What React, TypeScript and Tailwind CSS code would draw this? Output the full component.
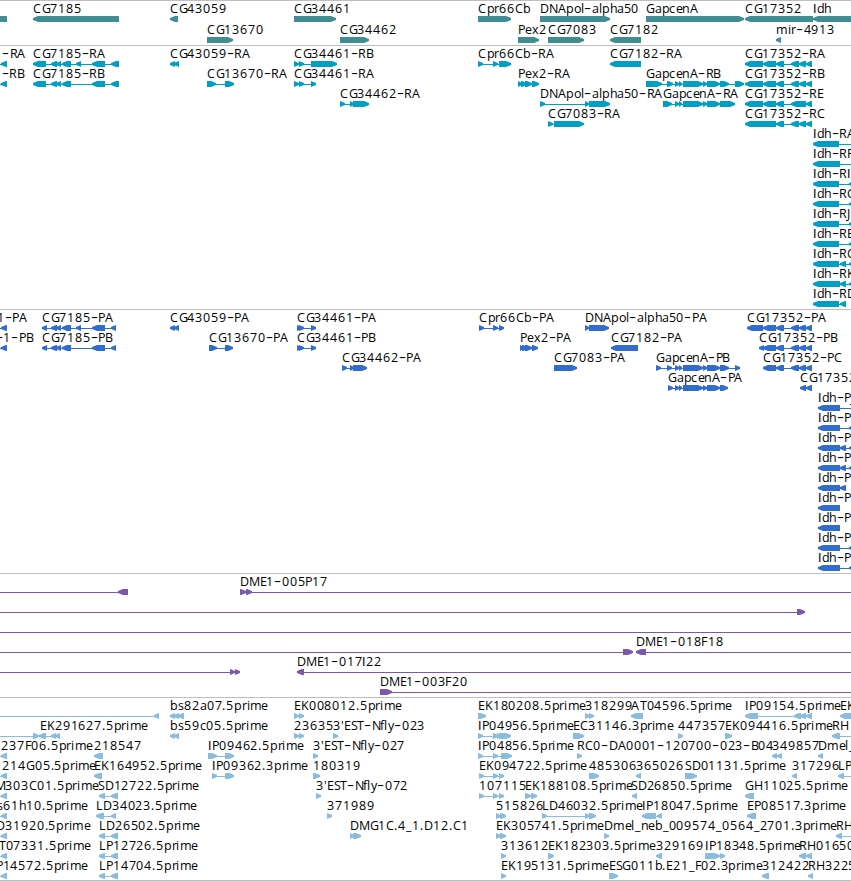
import React from "react";

type Strand = "L" | "R";
type Feature = {
  row: number;
  strand: Strand;
  blocks: [number, number][];
  label?: string;
  x?: number;
  end?: number;
  line?: [number, number];
};

const EDGE = 860;

// Horizontal advance of each character in the browser's label face, in pixels.
const ADVANCE: Record<string, number> = {
  A: 8.2, B: 6.9, C: 8.2, D: 8.9, E: 6.7, F: 6.4, G: 8.6, H: 8.8, I: 3.5, J: 3.6, K: 7.6, L: 6.4,
  M: 10.4, N: 8.7, O: 9.2, P: 6.9, R: 7.6, S: 6.2, T: 6.9, a: 6.8, b: 7.5, c: 6.2, d: 7.4, e: 6.9,
  f: 4.1, h: 7.2, i: 3.5, l: 3.4, m: 11.2, n: 7.4, o: 7.3, p: 7.5, r: 4.9, s: 6.1, x: 6.8, y: 6.4,
  ".": 3.9, "-": 7.5, "_": 6, "'": 3,
};
const advance = (c: string) => ADVANCE[c] ?? 7.9;
const widthOf = (s: string) => [...s].reduce((w, c) => w + advance(c), 0);

// Splits a label into runs: hyphens and the capital I are styled on their own.
function labelRuns(text: string, x: number) {
  let pen = x;
  return text
    .split(/([-I])/)
    .filter(Boolean)
    .map((run) => {
      const xs = [...run].map((c) => {
        const at = Math.round(pen + 0.4);
        pen += advance(c);
        return at;
      });
      return { run, xs: xs.join(" ") };
    });
}

const f = (
  row: number,
  label: string,
  x: number,
  strand: Strand,
  blocks: [number, number][],
  line?: [number, number],
): Feature => ({ row, label: label || undefined, x, strand, blocks, line });

const cut = (row: number, label: string, end: number): Feature => ({
  row, label, end, strand: "L", blocks: [[1, 7]], line: [-5, 3],
});

const genes: Feature[] = [
  f(0, "", 0, "L", [[-30, 7]]),
  f(0, "CG7185", 33, "L", [[33, 119]]),
  f(0, "CG43059", 170, "L", [[170, 178]]),
  f(0, "CG34461", 294, "R", [[294, 336]]),
  f(0, "Cpr66Cb", 478, "R", [[478, 511]]),
  f(0, "DNApol-alpha50", 540, "R", [[540, 610]]),
  f(0, "GapcenA", 646, "R", [[646, 744]]),
  f(0, "CG17352", 745, "L", [[745, 813]]),
  f(0, "Idh", 813, "L", [[813, EDGE]]),
  f(1, "CG13670", 207, "R", [[207, 233]]),
  f(1, "CG34462", 340, "R", [[340, 369]]),
  f(1, "Pex2", 518, "R", [[518, 539]]),
  f(1, "CG7083", 548, "R", [[548, 584]]),
  f(1, "CG7182", 610, "L", [[610, 641]]),
  f(1, "mir-4913", 776, "L", [[776, 781]]),
];

const gapMid: [number, number][] = [[675, 679], [679, 682], [683, 703], [703, 707], [707, 720]];
const cgTail: [number, number][] = [[776, 784], [791, 799], [799, 806], [806, 812]];

const transcripts: Feature[] = [
  cut(0, "-RA", 25),
  cut(1, "-RB", 23.5),
  f(0, "CG7185-RA", 33, "L", [[33, 46], [51, 57], [56, 61], [62, 71], [76, 81], [92, 105], [111, 119]]),
  f(1, "CG7185-RB", 33, "L", [[33, 46], [51, 57], [56, 61], [62, 71], [92, 105], [111, 119]]),
  f(0, "CG43059-RA", 170, "L", [[170, 175], [174, 179]]),
  f(1, "CG13670-RA", 207, "R", [[207, 216], [225, 234]]),
  f(0, "CG34461-RB", 294, "R", [[294, 299], [299, 304], [311, 337]]),
  f(1, "CG34461-RA", 294, "R", [[294, 299], [299, 304], [311, 316]]),
  f(2, "CG34462-RA", 340, "R", [[340, 345], [350, 354], [353, 369]]),
  f(0, "Cpr66Cb-RA", 478, "R", [[478, 483], [493, 498], [499, 511]]),
  f(1, "Pex2-RA", 518, "R", [[518, 522], [521, 527], [525, 532], [532, 539]]),
  f(2, "DNApol-alpha50-RA", 540, "R", [[540, 545], [585, 589], [589, 610]]),
  f(3, "CG7083-RA", 548, "R", [[548, 553], [554, 584]]),
  f(0, "CG7182-RA", 610, "L", [[610, 641]]),
  f(1, "GapcenA-RB", 646, "R", [[646, 662], [667, 673], ...gapMid, [720, 729], [735, 744]]),
  f(2, "GapcenA-RA", 663, "R", [[663, 672], ...gapMid, [720, 735]]),
  f(0, "CG17352-RA", 745, "L", [[745, 763], [763, 776], ...cgTail]),
  f(1, "CG17352-RB", 745, "L", [[745, 763], [763, 776], ...cgTail]),
  f(2, "CG17352-RE", 745, "L", [[745, 763], [763, 776], [776, 784], [791, 806], [806, 812]]),
  f(3, "CG17352-RC", 745, "L", [[745, 776], ...cgTail]),
  f(4, "Idh-RA", 813, "L", [[813, 839]], [830, EDGE]),
  f(5, "Idh-RF", 813, "L", [[813, 840]], [830, EDGE]),
  f(6, "Idh-RI", 813, "L", [[813, 839], [849, 856]], [830, EDGE]),
  f(7, "Idh-RG", 813, "L", [[813, 839], [849, 856]], [830, EDGE]),
  f(8, "Idh-RJ", 813, "L", [[813, 839], [849, 856]], [830, EDGE]),
  f(9, "Idh-RB", 813, "L", [[813, 839], [849, 856]], [830, EDGE]),
  f(10, "Idh-RC", 813, "L", [[813, 839], [840, 846], [849, 856]], [830, EDGE]),
  f(11, "Idh-RK", 813, "L", [[813, 840], [840, 846], [849, 856]], [830, EDGE]),
  f(12, "Idh-RD", 813, "L", [[813, 839], [840, 846]]),
];

const proteins: Feature[] = [
  cut(0, "1-PA", 27),
  cut(1, "-1-PB", 32),
  f(0, "CG7185-PA", 42, "L", [[42, 47], [51, 57], [56, 61], [62, 71], [76, 81], [92, 105], [111, 116]]),
  f(1, "CG7185-PB", 42, "L", [[42, 47], [51, 57], [56, 61], [62, 71], [92, 105], [111, 116]]),
  f(0, "CG43059-PA", 170, "L", [[170, 175], [174, 179]]),
  f(1, "CG13670-PA", 209, "R", [[209, 217], [225, 233]]),
  f(0, "CG34461-PA", 297, "R", [[297, 302], [299, 304], [311, 316]]),
  f(1, "CG34461-PB", 297, "R", [[297, 302], [299, 304], [311, 316]]),
  f(2, "CG34462-PA", 342, "R", [[342, 347], [350, 354], [353, 367]]),
  f(0, "Cpr66Cb-PA", 479, "R", [[479, 484], [493, 498], [499, 504]]),
  f(1, "Pex2-PA", 520, "R", [[520, 524], [522, 528], [525, 532], [532, 538]]),
  f(2, "CG7083-PA", 554, "R", [[554, 577]]),
  f(0, "DNApol-alpha50-PA", 585, "R", [[585, 589], [589, 609]]),
  f(1, "CG7182-PA", 611, "L", [[611, 638]]),
  f(2, "GapcenA-PB", 656, "R", [[656, 661], [667, 672], ...gapMid, [720, 729], [735, 740]]),
  f(3, "GapcenA-PA", 668, "R", [[668, 673], ...gapMid, [720, 728]]),
  f(0, "CG17352-PA", 747, "L", [[747, 763], [763, 776], ...cgTail]),
  f(1, "CG17352-PB", 759, "L", [[759, 764], [763, 776], ...cgTail]),
  f(2, "CG17352-PC", 763, "L", [[763, 776], ...cgTail]),
  f(3, "CG17352-PD", 800, "L", [[800, 806], [806, 812]]),
  f(4, "Idh-PJ", 818, "L", [[818, 840]], [830, EDGE]),
  f(5, "Idh-PF", 818, "L", [[818, 840], [849, 856]], [830, EDGE]),
  f(6, "Idh-PC", 818, "L", [[818, 840], [840, 846], [849, 856]], [830, EDGE]),
  f(7, "Idh-PK", 818, "L", [[818, 840], [840, 846], [849, 856]], [830, EDGE]),
  f(8, "Idh-PD", 818, "L", [[818, 840], [840, 846]]),
  f(9, "Idh-PA", 818, "L", [[818, 840]]),
  f(10, "Idh-PI", 818, "L", [[818, 840]]),
  f(11, "Idh-PG", 818, "L", [[818, 840], [849, 856]], [830, EDGE]),
  f(12, "Idh-PB", 818, "L", [[818, 840], [849, 856]], [830, EDGE]),
];

const clones: Feature[] = [
  f(0, "", 0, "L", [[118, 128]], [-5, 120]),
  f(0, "DME1-005P17", 240, "R", [[240, 246], [246, 252]], [246, EDGE]),
  f(1, "", 0, "R", [[797, 805]], [-5, 800]),
  f(2, "", 0, "R", [], [-5, EDGE]),
  f(3, "", 0, "R", [[623, 633]], [-5, 626]),
  f(3, "DME1-018F18", 636, "L", [[636, 646]], [640, EDGE]),
  f(4, "", 0, "R", [[230, 235], [235, 240]], [-5, 235]),
  f(4, "DME1-017I22", 297, "L", [[297, 304]], [300, EDGE]),
  f(5, "DME1-003F20", 380, "R", [[380, 392]], [385, EDGE]),
];

const lpTail: [number, number][] = [[99, 105], [111, 118]];

const ests: Feature[] = [
  f(0, "", 0, "L", [[154, 159]], [-5, 156]),
  f(0, "bs82a07.5prime", 170, "L", [[170, 175], [174, 179], [178, 184]]),
  f(0, "EK008012.5prime", 294, "R", [[294, 299], [299, 304]]),
  f(0, "EK180208.5prime", 478, "R", [[478, 486]]),
  f(0, "318299", 585, "R", [[585, 590], [589, 594]]),
  f(0, "AT04596.5prime", 631, "L", [[631, 643]]),
  f(0, "IP09154.5prime", 745, "L", [[745, 758], [794, 801], [800, 806], [806, 812]]),
  f(0, "EK", 840, "L", [[840, EDGE]]),
  f(1, "", 0, "R", [[33, 39]], [-5, 35]),
  f(1, "EK291627.5prime", 40, "L", [[39, 46], [51, 56], [55, 60]]),
  f(1, "bs59c05.5prime", 170, "L", [[170, 175], [174, 179]]),
  f(1, "23635", 294, "R", [[294, 299], [299, 304]]),
  f(1, "3'EST-Nfly-023", 333, "R", [[333, 338]]),
  f(1, "IP04956.5prime", 478, "R", [[478, 483], [493, 498], [497, 501], [499, 511]]),
  f(1, "EC31146.3prime", 573, "R", [[573, 584]]),
  f(1, "447357", 678, "R", [[678, 683]]),
  f(1, "EK094416.5prime", 725, "R", [[725, 732]]),
  f(1, "RH", 832, "L", [[832, 840]], [835, EDGE]),
  cut(2, "237F06.5prime", 92.5),
  f(2, "218547", 94, "L", [[94, 103]]),
  f(2, "IP09462.5prime", 208, "R", [[208, 217], [225, 234]]),
  f(2, "3'EST-Nfly-027", 313, "R", [[313, 318]]),
  f(2, "IP04856.5prime", 478, "R", [[478, 483], [493, 498], [501, 512]]),
  f(2, "RC0-DA0001-120700-023-B04", 577, "R", [[577, 582]]),
  f(2, "349857", 772, "L", [[772, 777], [777, 782]]),
  f(2, "Dmel_neb", 818, "L", [[818, 823]]),
  cut(3, "214G05.5prime", 96),
  f(3, "EK164952.5prime", 94, "L", [[94, 102]]),
  f(3, "IP09362.3prime", 212, "R", [[212, 217], [225, 234]]),
  f(3, "180319", 313, "R", [[313, 320]]),
  f(3, "EK094722.5prime", 479, "R", [[479, 484], [493, 498], [499, 504]]),
  f(3, "485306", 589, "R", [[589, 599]]),
  f(3, "365026", 636, "L", [[636, 641]]),
  f(3, "SD01131.5prime", 685, "R", [[685, 697]]),
  f(3, "317296", 792, "L", [[792, 797]]),
  f(3, "LP", 838, "L", [[838, 844]], [840, EDGE]),
  cut(4, "M303C01.5prime", 98.5),
  f(4, "SD12722.5prime", 98, "L", lpTail),
  f(4, "3'EST-Nfly-072", 316, "R", [[316, 321]]),
  f(4, "107115", 479, "R", [[479, 484], [493, 498], [499, 504]]),
  f(4, "EK188108.5prime", 525, "R", [[525, 531], [531, 537]]),
  f(4, "SD26850.5prime", 631, "L", [[632, 637]]),
  f(4, "GH11025.5prime", 745, "L", [[745, 754]]),
  cut(5, "s61h10.5prime", 87.5),
  f(5, "LD34023.5prime", 96, "L", [[96, 104], [111, 116]]),
  f(5, "371989", 327, "R", [[327, 332]]),
  f(5, "515826", 496, "R", [[496, 501], [500, 506]]),
  f(5, "LD46032.5prime", 542, "R", [[542, 547], [585, 590], [589, 596]]),
  f(5, "IP18047.5prime", 642, "L", [[642, 656], [657, 662]]),
  f(5, "EP08517.3prime", 747, "L", [[747, 756]]),
  cut(6, "D31920.5prime", 90),
  f(6, "LD26502.5prime", 99, "L", lpTail),
  f(6, "DMG1C.4_1.D12.C1", 350, "R", [[350, 354], [353, 361]]),
  f(6, "EK305741.5prime", 496, "R", [[496, 501], [500, 506]]),
  f(6, "Dmel_neb_009574_0564_2701.3prime", 604, "R", [[604, 609]]),
  f(6, "RH", 836, "L", [[836, 842]], [838, EDGE]),
  cut(7, "T07331.5prime", 90.5),
  f(7, "LP12726.5prime", 99, "L", lpTail),
  f(7, "313612", 501, "R", [[501, 506]]),
  f(7, "EK182303.5prime", 548, "R", [[548, 554]]),
  f(7, "329169", 656, "L", [[656, 662]]),
  f(7, "IP18348.5prime", 705, "R", [[705, 720], [720, 725]]),
  f(7, "RH01650", 799, "L", [[799, 806], [806, 812]]),
  cut(8, "P14572.5prime", 87.5),
  f(8, "LP14704.5prime", 99, "L", lpTail),
  f(8, "EK195131.5prime", 501, "R", [[501, 506]]),
  f(8, "ESG011b.E21_F02.3prime", 609, "R", [[609, 618]]),
  f(8, "312422", 762, "L", [[762, 769]]),
  f(8, "RH3225", 808, "L", [[808, 813]]),
];

function blockPath(a: number, b: number, y: number, strand: Strand) {
  const head = Math.min(5, b - a);
  return strand === "R"
    ? `M${a} ${y}H${b - head}L${b} ${y + 2}V${y + 4}L${b - head} ${y + 6}H${a}Z`
    : `M${b} ${y}H${a + head}L${a} ${y + 2}V${y + 4}L${a + head} ${y + 6}H${b}Z`;
}

function FeatureGlyph({ feature, pitch }: { feature: Feature; pitch: number }) {
  const { row, strand, blocks, label } = feature;
  const y = row * pitch + 15;
  const line =
    feature.line ??
    (blocks.length > 1 ? ([blocks[0][0] + 3, blocks[blocks.length - 1][1] - 3] as [number, number]) : undefined);
  const x = feature.end !== undefined && label ? feature.end - widthOf(label) : feature.x ?? 0;
  const baseline = row * pitch + 12;
  return (
    <g>
      {line && <rect x={line[0]} y={y + 3} width={line[1] - line[0]} height={1} />}
      {blocks.map(([a, b]) => (
        <path key={a} d={blockPath(a, b, y, strand)} />
      ))}
      {label && (
        <text className="fill-black">
          {labelRuns(label, x).map(({ run, xs }, i) =>
            run === "-" ? (
              <tspan key={i} x={xs} y={baseline + 2} className="text-[22px] font-light">
                {run}
              </tspan>
            ) : (
              <tspan
                key={i}
                x={xs}
                y={baseline}
                className={run === "I" ? "font-['Liberation_Sans',sans-serif]" : undefined}
              >
                {run}
              </tspan>
            ),
          )}
        </text>
      )}
    </g>
  );
}

function Track({
  features,
  className,
  pitch = 20,
}: {
  features: Feature[];
  className: string;
  pitch?: number;
}) {
  return (
    <section className={`w-full overflow-hidden border-t border-[#bebebe] ${className}`}>
      <svg className="block h-full w-full text-[12.5px]">
        {features.map((feature, i) => (
          <FeatureGlyph key={i} feature={feature} pitch={pitch} />
        ))}
      </svg>
    </section>
  );
}

export default function App() {
  return (
    <main className="flex h-[881px] w-[851px] flex-col overflow-hidden border-b border-[#bebebe] bg-white font-['Open_Sans','Noto_Sans',sans-serif]">
      <Track features={genes} pitch={21} className="h-[45px] fill-[#408e94]" />
      <Track features={transcripts} className="h-[264px] fill-[#009fc3]" />
      <Track features={proteins} className="h-[264px] fill-[#316dcf]" />
      <Track features={clones} className="h-[124px] fill-[#7a59a9]" />
      <Track features={ests} className="h-[183px] fill-[#89bcde]" />
    </main>
  );
}
